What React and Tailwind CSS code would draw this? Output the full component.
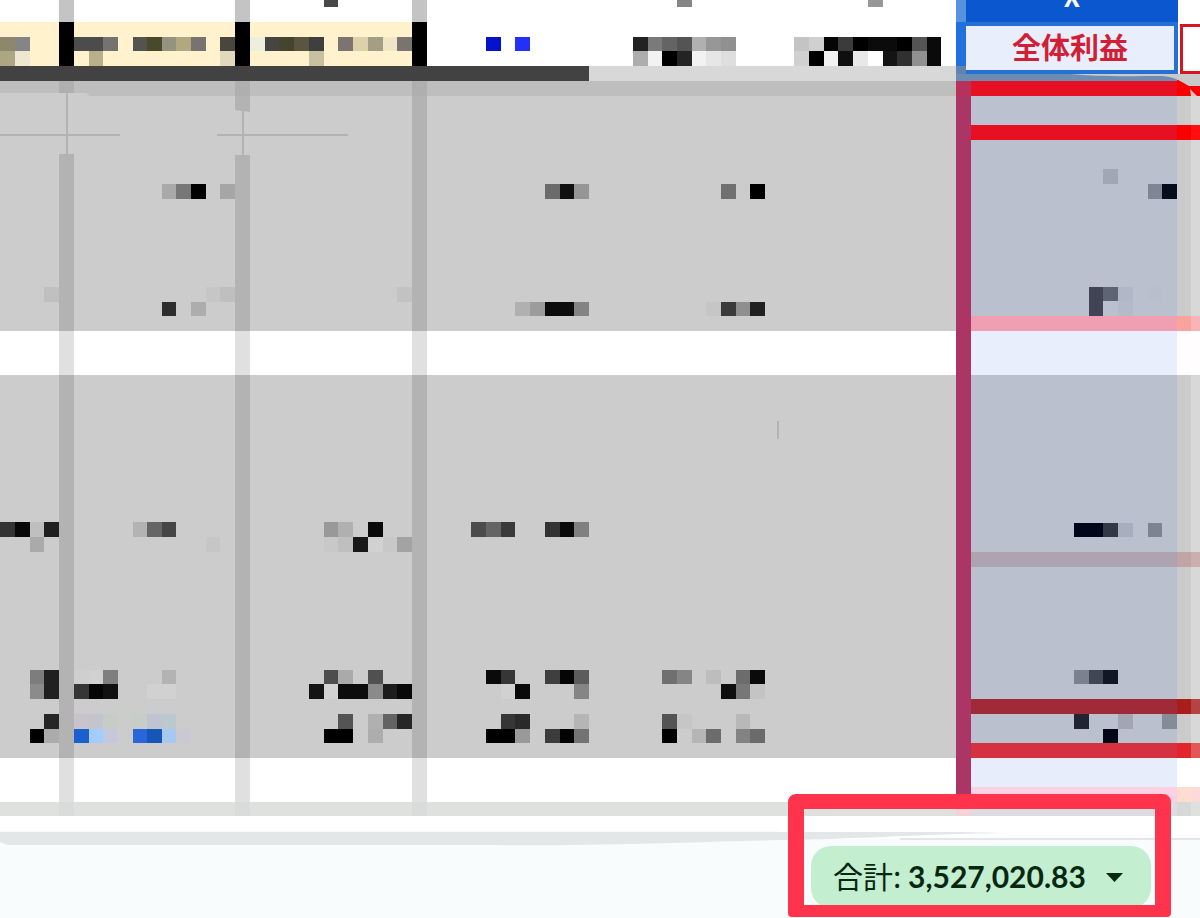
import React from 'react';

// Redacted values, one entry per run of blocks: [column, row, width, colour].
const BLOCKS = [
  [22, -1, 1, '#484848'], [46, -1, 1, '#868686'], [59, -1, 1, '#979797'],

  [0, 2, 1, '#8f876b'], [1, 2, 1, '#858587'],
  [5, 2, 2, '#4c4c4c'], [7, 2, 1, '#757370'], [9, 2, 1, '#535350'], [10, 2, 1, '#484a2a'],
  [11, 2, 1, '#94937f'], [12, 2, 1, '#b1a881'], [13, 2, 1, '#787370'], [15, 2, 1, '#48463f'],
  [17, 2, 1, '#eeeede'], [18, 2, 1, '#454542'], [19, 2, 1, '#45452f'], [20, 2, 1, '#5a553f'],
  [21, 2, 1, '#3f3f3f'], [23, 2, 1, '#7d7470'], [24, 2, 1, '#dbd2ac'], [25, 2, 1, '#a49f83'],
  [26, 2, 1, '#f0e6c6'], [27, 2, 1, '#787570'],
  [33, 2, 1, '#0412cc'], [35, 2, 1, '#2330f7'],
  [43, 2, 1, '#222222'], [44, 2, 1, '#7a7a7a'], [45, 2, 1, '#646464'], [46, 2, 1, '#545454'],
  [47, 2, 1, '#b0b0b0'], [48, 2, 1, '#979797'], [49, 2, 1, '#909090'],
  [54, 2, 1, '#c4c4c4'], [55, 2, 1, '#d0d0d0'], [56, 2, 1, '#050505'], [57, 2, 1, '#3b3b3b'],
  [58, 2, 1, '#000000'], [59, 2, 2, '#0b0b0b'], [61, 2, 1, '#000000'], [62, 2, 1, '#545454'],
  [63, 2, 1, '#0a0a0a'],

  [0, 3, 1, '#aea682'], [1, 3, 1, '#efe7cf'], [6, 3, 1, '#b9b08b'], [15, 3, 1, '#e0d9ba'],
  [21, 3, 1, '#c8c0a1'],
  [43, 3, 1, '#adadad'], [44, 3, 1, '#f2f2f2'], [45, 3, 1, '#000000'], [46, 3, 1, '#242424'],
  [47, 3, 1, '#f2f2f2'], [48, 3, 1, '#e6e6e6'], [49, 3, 1, '#dedede'],
  [54, 3, 1, '#d0d0d0'], [55, 3, 1, '#000000'], [56, 3, 1, '#f2f2f2'], [57, 3, 1, '#0f0f0f'],
  [58, 3, 1, '#e8e8e8'], [60, 3, 1, '#141414'], [61, 3, 1, '#303030'], [62, 3, 1, '#909090'],
  [63, 3, 1, '#0a0a0a'],

  [75, 11, 1, '#a2a7b4'],
  [11, 12, 1, '#a9a9a9'], [12, 12, 1, '#777777'], [13, 12, 1, '#000000'], [15, 12, 1, '#a6a6a6'],
  [37, 12, 1, '#6b6b6b'], [38, 12, 1, '#111111'], [39, 12, 1, '#969696'],
  [49, 12, 1, '#707070'], [51, 12, 1, '#000000'], [78, 12, 1, '#7f8594'], [79, 12, 1, '#060c1c'],

  [3, 19, 1, '#c0c0c0'], [14, 19, 1, '#c6c6c6'], [15, 19, 1, '#bfbfbf'], [27, 19, 1, '#c2c2c2'],
  [74, 19, 1, '#404454'], [75, 19, 1, '#5f6474'], [76, 19, 1, '#b1b7c6'], [78, 19, 1, '#b8becb'],
  [11, 20, 1, '#2e2e2e'], [13, 20, 1, '#adadad'],
  [35, 20, 1, '#b0b0b0'], [36, 20, 1, '#9c9c9c'], [37, 20, 2, '#0c0c0c'], [39, 20, 1, '#838383'],
  [48, 20, 1, '#c6c6c6'], [49, 20, 1, '#3b3b3b'], [50, 20, 1, '#8f8f8f'], [51, 20, 1, '#202020'],
  [74, 20, 1, '#404454'], [76, 20, 1, '#b4bac8'],

  [0, 35, 1, '#333333'], [1, 35, 1, '#080808'], [2, 35, 1, '#bfbfbf'], [3, 35, 1, '#202020'],
  [9, 35, 1, '#b3b3b3'], [10, 35, 1, '#656565'], [11, 35, 1, '#454545'],
  [22, 35, 1, '#999999'], [23, 35, 1, '#b0b0b0'], [25, 35, 1, '#0a0a0a'],
  [32, 35, 1, '#4c4c4c'], [33, 35, 1, '#656565'], [34, 35, 1, '#3a3a3a'],
  [37, 35, 1, '#333333'], [38, 35, 1, '#0a0a0a'], [39, 35, 1, '#808080'],
  [73, 35, 2, '#01071a'], [75, 35, 1, '#333846'], [76, 35, 1, '#a8aebd'], [78, 35, 1, '#7d8390'],
  [2, 36, 1, '#aaaaaa'], [14, 36, 1, '#c6c6c6'], [22, 36, 1, '#c8c8c8'], [23, 36, 1, '#bfbfbf'],
  [24, 36, 1, '#181818'], [25, 36, 1, '#d1d1d1'], [26, 36, 1, '#c8c8c8'], [27, 36, 1, '#a3a3a3'],

  [2, 45, 1, '#7d7d7d'], [3, 45, 1, '#202020'], [5, 45, 1, '#cfcfcf'], [6, 45, 1, '#d1d1d1'],
  [7, 45, 1, '#7f7f7f'], [11, 45, 1, '#b3b3b3'],
  [22, 45, 1, '#4d4d4d'], [23, 45, 1, '#aaaaaa'], [25, 45, 1, '#505050'],
  [33, 45, 1, '#0a0a0a'], [34, 45, 1, '#363636'], [37, 45, 1, '#3f3f3f'], [38, 45, 1, '#050505'],
  [39, 45, 1, '#5c5c5c'], [45, 45, 1, '#707070'], [46, 45, 1, '#858585'], [48, 45, 1, '#bdbdbd'],
  [50, 45, 1, '#6c6c6c'], [51, 45, 1, '#0a0a0a'],
  [73, 45, 1, '#7c818e'], [74, 45, 1, '#404654'], [75, 45, 1, '#101826'],
  [2, 46, 1, '#8b8b8b'], [3, 46, 1, '#202020'], [5, 46, 1, '#363636'], [6, 46, 1, '#050505'],
  [7, 46, 1, '#111111'], [10, 46, 2, '#d1d1d1'],
  [21, 46, 1, '#141414'], [22, 46, 1, '#d2d2d2'], [23, 46, 2, '#0c0c0c'], [25, 46, 1, '#8a8a8a'],
  [26, 46, 1, '#1c1c1c'], [27, 46, 1, '#080808'],
  [34, 46, 1, '#d1d1d1'], [35, 46, 1, '#0a0a0a'], [39, 46, 1, '#858585'],
  [49, 46, 1, '#0f0f0f'], [50, 46, 1, '#777777'], [51, 46, 1, '#c4c4c4'],

  [3, 48, 1, '#262626'], [5, 48, 1, '#c9c4cb'], [6, 48, 1, '#c3c4cc'], [7, 48, 1, '#c7cdc6'],
  [9, 48, 1, '#c7cdc9'], [10, 48, 1, '#bfc4d0'], [11, 48, 1, '#bbc9cf'],
  [23, 48, 1, '#545454'], [25, 48, 1, '#b0b0b0'], [26, 48, 1, '#636363'], [27, 48, 1, '#262626'],
  [34, 48, 1, '#363636'], [35, 48, 1, '#2a2a2a'], [39, 48, 1, '#b5b5b5'],
  [45, 48, 1, '#545454'], [46, 48, 1, '#c6c6c6'], [50, 48, 1, '#b8b8b8'],
  [73, 48, 1, '#202433'], [76, 48, 1, '#a1a6b2'], [79, 48, 1, '#868b98'],
  [2, 49, 1, '#000000'], [3, 49, 1, '#ababab'], [5, 49, 1, '#1c5fcf'], [6, 49, 1, '#a3ccff'],
  [7, 49, 1, '#c5c7dc'], [9, 49, 1, '#2866da'], [10, 49, 1, '#1556b8'], [11, 49, 1, '#a6c9f2'],
  [12, 49, 1, '#cac8d0'], [22, 49, 2, '#000000'], [25, 49, 1, '#adadad'],
  [33, 49, 2, '#000000'], [35, 49, 1, '#999999'], [37, 49, 1, '#3c3c3c'], [38, 49, 1, '#030303'],
  [39, 49, 1, '#737373'], [45, 49, 1, '#000000'], [47, 49, 1, '#b5b5b5'], [48, 49, 1, '#6c6c6c'],
  [50, 49, 1, '#838383'], [51, 49, 1, '#6a6a6a'], [75, 49, 1, '#020818'],
];

const COLUMNS = [
  { id: 'a', from: 0, to: 4, width: 'w-[59px]', tinted: true },
  { id: 'a-line', divider: true, width: 'w-[15px]' },
  { id: 'b', from: 5, to: 16, width: 'w-[161px]', tinted: true },
  { id: 'b-line', divider: true, width: 'w-[15px]' },
  { id: 'c', from: 17, to: 28, width: 'w-[162px]', tinted: true },
  { id: 'c-line', divider: true, width: 'w-[15px]' },
  { id: 'd', from: 29, to: 40, width: 'w-[162px]' },
  { id: 'e', from: 40, to: 52, width: 'w-[176px]' },
  { id: 'f', from: 52, to: 65, width: 'w-[191px]' },
];

const BANDS = [
  { from: -0.5, to: 1, height: 'h-[22px]', cell: 'bg-white', line: 'bg-[#c4c4c4]' },
  { from: 1, to: 4, height: 'h-[44px]', cell: 'bg-white', tint: 'bg-[#fff2cc]', line: 'bg-black' },
  { from: 4, to: 5, height: 'h-[15px]', cell: 'bg-[#d8d8d8]', frozen: true, line: 'bg-[#424242]' },
  { from: 5, to: 6, height: 'h-[15px]', cell: 'bg-[#bebebe]', line: 'bg-[#afafaf]' },
  { from: 6, to: 22, height: 'h-[235px]', cell: 'bg-[#cccccc]', line: 'bg-[#b3b3b3]' },
  { from: 22, to: 25, height: 'h-[44px]', cell: 'bg-white', line: 'bg-[#e0e0e0]' },
  { from: 25, to: 51, height: 'h-[383px]', cell: 'bg-[#cccccc]', line: 'bg-[#b3b3b3]' },
  { from: 51, to: 54, height: 'h-[44px]', cell: 'bg-white', line: 'bg-[#e0e0e0]' },
  { from: 54, to: 55, height: 'h-[14px]', cell: 'bg-[#dfe1df]', line: 'bg-[#d9dcda]' },
];

const PROFIT_ROWS = [
  { from: 6, to: 8, height: 'h-[29px]', cell: 'bg-[#bcc1cf]', edge: 'bg-[#cbcbcb]', outer: 'bg-[#d8d8d8]' },
  { from: 8, to: 9, height: 'h-[15px]', cell: 'bg-[#e61022]', edge: 'bg-[#fa0000]', outer: 'bg-[#ff1010]' },
  { from: 9, to: 21, height: 'h-[176px]', cell: 'bg-[#bbc0cf]', edge: 'bg-[#cbcbcb]', outer: 'bg-[#d8d8d8]' },
  { from: 21, to: 22, height: 'h-[15px]', cell: 'bg-[#f09fb3]', edge: 'bg-[#f8a49c]', outer: 'bg-[#fab4b8]' },
  { from: 22, to: 25, height: 'h-[44px]', cell: 'bg-[#e9eefd]', edge: 'bg-[#fffefc]', outer: 'bg-white' },
  { from: 25, to: 37, height: 'h-[177px]', cell: 'bg-[#bbc0cf]', edge: 'bg-[#cbcbcb]', outer: 'bg-[#d8d8d8]' },
  { from: 37, to: 38, height: 'h-[15px]', cell: 'bg-[#ada3b1]', edge: 'bg-[#bfa5a6]', outer: 'bg-[#ccaeae]' },
  { from: 38, to: 47, height: 'h-[132px]', cell: 'bg-[#bbc0cf]', edge: 'bg-[#cbcbcb]', outer: 'bg-[#d8d8d8]' },
  { from: 47, to: 48, height: 'h-[15px]', cell: 'bg-[#a12a39]', edge: 'bg-[#a81e1c]', outer: 'bg-[#b44442]' },
  { from: 48, to: 50, height: 'h-[29px]', cell: 'bg-[#bbc0cf]', edge: 'bg-[#cbcbcb]', outer: 'bg-[#d8d8d8]' },
  { from: 50, to: 51, height: 'h-[15px]', cell: 'bg-[#d53141]', edge: 'bg-[#e3242c]', outer: 'bg-[#e05858]' },
  { from: 51, to: 53, height: 'h-[29px]', cell: 'bg-[#e8edfb]', edge: 'bg-white', outer: 'bg-white' },
  { from: 53, to: 54, height: 'h-[15px]', cell: 'bg-[#fad0e2]', edge: 'bg-[#ffdcd0]', outer: 'bg-[#ffd8d8]' },
];

function Mosaic({ x, y, cols, rows, height }) {
  const blocks = BLOCKS.filter(
    ([bx, by]) => bx >= x && bx < x + cols && by + 1 > y && by < y + rows
  );

  return (
    <svg
      className={`block w-full ${height}`}
      viewBox={`${x} ${y} ${cols} ${rows}`}
      preserveAspectRatio="none"
      shapeRendering="crispEdges"
      aria-hidden="true"
    >
      {blocks.map(([bx, by, width, fill]) => (
        <rect key={`${bx}-${by}`} x={bx} y={by} width={width} height="1" fill={fill} />
      ))}
    </svg>
  );
}

function bandColour(band, column) {
  if (band.frozen) {
    return column.id === 'e' || column.id === 'f' ? band.cell : band.line;
  }
  if (column.divider) {
    return band.line;
  }
  return column.tinted && band.tint ? band.tint : band.cell;
}

// Thin guide marks drawn over the first columns.
function Marks() {
  return (
    <svg className="absolute left-0 top-[81px] h-[360px] w-[956px]" viewBox="0 0 956 360" aria-hidden="true">
      <path fill="#cccccc" d="M0 12H86L90 15H0zM58 12H75V73H58zM234 29L251 31V74H234z" />
      <path fill="#afafaf" d="M59 0H74V12H59z" />
      <path fill="none" stroke="#b3b3b3" strokeWidth="2" d="M67 12V73M243 30V74M0 54H120M217 54H348M778 340V358" />
    </svg>
  );
}

function Sheet() {
  return (
    <div className="relative min-w-0 flex-1">
      <table className="w-full table-fixed border-collapse" aria-label="明細">
        <colgroup>
          {COLUMNS.map((column) => (
            <col key={column.id} className={column.width} />
          ))}
        </colgroup>
        <tbody>
          {BANDS.map((band) => (
            <tr key={band.from} className={band.height}>
              {COLUMNS.map((column) => (
                <td key={column.id} className={`p-0 ${bandColour(band, column)}`}>
                  {!column.divider && (
                    <Mosaic
                      x={column.from}
                      y={band.from}
                      cols={column.to - column.from}
                      rows={band.to - band.from}
                      height={band.height}
                    />
                  )}
                </td>
              ))}
            </tr>
          ))}
        </tbody>
      </table>
      <Marks />
    </div>
  );
}

function ProfitHeader() {
  return (
    <div className="flex h-[74px]">
      <div className="flex w-[10px] flex-col">
        <div className="h-[22px] bg-[#5692de]" />
        <div className="h-[44px] bg-[#1f72de]" />
        <div className="flex-1 bg-[#6283ad]" />
      </div>
      <div className="flex w-[212px] flex-col">
        <div className="flex h-[22px] justify-center overflow-hidden bg-[#0b57d0] text-[26px] font-bold leading-[26px] text-white">
          <span className="-mt-[17px]">X</span>
        </div>
        <div className="flex h-[52px] items-center justify-center border-4 border-l-0 border-[#2470d4] bg-[#e9eefd] pb-1 text-[29px] font-bold leading-[36px] text-[#d21f36]">
          全体利益
        </div>
      </div>
      <div className="flex flex-1 flex-col pl-[2px]">
        <div className="h-[24px] bg-white" />
        <div className="h-[50px] border-[3px] border-r-0 border-[#d81420] bg-white" />
      </div>
    </div>
  );
}

function ProfitColumn() {
  return (
    <div className="w-[244px] shrink-0">
      <ProfitHeader />
      <svg className="block h-[22px] w-full" viewBox="0 0 244 22" preserveAspectRatio="none" aria-hidden="true">
        <path fill="#6b8cb3" d="M0 0H244V7H0z" />
        <path fill="#b8315a" d="M0 7H15V22H0z" />
        <path fill="#e61022" d="M15 7H221V22H15z" />
        <path fill="#fa0000" d="M221 6H244V22H221z" />
        <path fill="#c9c9c9" d="M115 0H244V12H233C227 9 220 3 206 2C180 2 140 3 115 0z" />
        <path fill="#e4c4c0" d="M234 15L241 22H235z" />
      </svg>
      <table className="w-full table-fixed border-collapse" aria-label="全体利益">
        <colgroup>
          <col className="w-[15px]" />
          <col className="w-[206px]" />
          <col className="w-[14px]" />
          <col className="w-[9px]" />
        </colgroup>
        <tbody>
          {PROFIT_ROWS.map((row) => (
            <tr key={row.from} className={row.height}>
              <td className="bg-[#ab3565] p-0" />
              <td className={`p-0 ${row.cell}`}>
                <Mosaic x={66} y={row.from} cols={14} rows={row.to - row.from} height={row.height} />
              </td>
              <td className={`p-0 ${row.edge}`} />
              <td className={`p-0 ${row.outer}`} />
            </tr>
          ))}
          <tr className="h-[14px]">
            <td className="bg-[#f3d3d5] p-0" />
            <td className="bg-[#dcdde2] p-0" />
            <td className="bg-[#d6d9d5] p-0" />
            <td className="bg-[#dfe1df] p-0" />
          </tr>
        </tbody>
      </table>
    </div>
  );
}

function SummaryBar() {
  return (
    <footer className="relative mt-[15px] flex flex-1 flex-col bg-[#f8fcfd]">
      <svg className="block h-[15px] w-full" viewBox="0 0 1200 15" preserveAspectRatio="none" aria-hidden="true">
        <path fill="#ffffff" d="M780 0H1200V8H780z" />
        <path fill="#e3e7e8" d="M0 1H960L1005 2C900 4 860 8 780 9C690 11 600 15 480 14H8L0 11z" />
        <path fill="#e3e5e8" d="M900 7H1200V9H900z" />
      </svg>
      <div className="flex justify-end pb-[10px] pr-[49px]">
        <button
          type="button"
          className="flex h-[62px] w-[340px] items-center justify-between rounded-[20px] bg-[#c4eed0] pb-1 pl-[22px] pr-[28px] text-[30px] leading-[40px] text-[#072711]"
        >
          <span className="whitespace-nowrap">
            合計: <span className="font-['Lato'] font-bold">3,527,020.83</span>
          </span>
          <svg className="mt-1 h-[9px] w-[17px]" viewBox="0 0 17 9" aria-hidden="true">
            <path fill="currentColor" d="M0 0H17L8.5 9z" />
          </svg>
        </button>
      </div>
      <div className="pointer-events-none absolute -top-[37px] right-[29px] h-[123px] w-[383px] rounded-t-lg rounded-b-sm border-x-[16px] border-t-[15px] border-b-[12px] border-[#ff334b]" />
    </footer>
  );
}

function App() {
  return (
    <main className="flex min-h-screen flex-col overflow-hidden bg-white font-['Noto_Sans_CJK_JP',sans-serif]">
      <div className="flex">
        <Sheet />
        <ProfitColumn />
      </div>
      <SummaryBar />
    </main>
  );
}

export default App;
